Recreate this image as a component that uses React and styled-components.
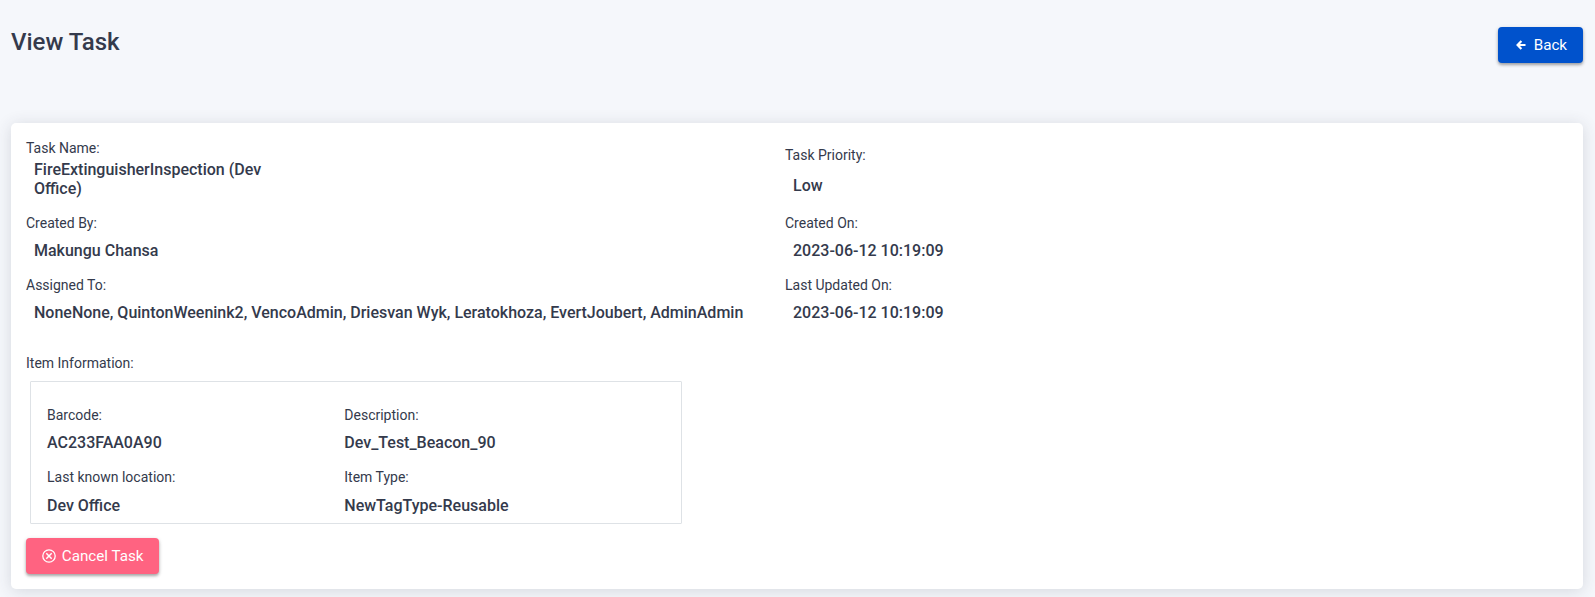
import React from "react";
import styled, { createGlobalStyle } from "styled-components";

const GlobalStyle = createGlobalStyle`
  * { box-sizing: border-box; }
  html, body { margin: 0; height: 100%; overflow: hidden; }
  body {
    background: #f5f7fb;
    color: #343a4c;
    font-family: Roboto, "Liberation Sans", sans-serif;
    font-size: 14px;
    line-height: 21px;
  }
`;

const Page = styled.main`
  width: 100%;
  padding: 27px 12px 8px 11px;
`;

const Header = styled.header`
  display: flex;
  justify-content: space-between;
  align-items: flex-start;
  height: 96px;
`;

const Title = styled.h1`
  margin: 0;
  font-size: 24px;
  font-weight: 500;
  line-height: 31px;
`;

const Button = styled.button`
  display: inline-flex;
  align-items: center;
  gap: ${(p) => p.$gap}px;
  width: ${(p) => p.$width}px;
  height: 36px;
  padding: 0 0 0 ${(p) => p.$inset}px;
  border: 0;
  border-radius: 4px;
  background: ${(p) => p.$color};
  color: #fff;
  font: 400 15.2px/22px Roboto, "Liberation Sans", sans-serif;
  white-space: nowrap;
  box-shadow: 0 2px 3px rgba(0, 0, 0, 0.3), 0 1px 5px rgba(0, 0, 0, 0.1);
`;

const Card = styled.section`
  height: 466px;
  padding: 15px;
  border-radius: 5px;
  background: #fff;
  box-shadow: 0 2px 16px rgba(50, 55, 75, 0.16);
`;

const Details = styled.div`
  display: grid;
  grid-template-columns: 759px 1fr;
  grid-template-rows: 75px 62px 78px;
`;

const Field = styled.div`
  padding-top: ${(p) => p.$offset || 0}px;
`;

const Label = styled.div`
  height: 21px;
`;

const Value = styled.div`
  max-width: ${(p) => (p.$narrow ? "245px" : "none")};
  margin-top: ${(p) => p.$gap ?? 7}px;
  padding-left: ${(p) => (p.$indent ? 8 : 0)}px;
  font-size: 16px;
  font-weight: 500;
  line-height: 19px;
`;

const ItemBox = styled.div`
  display: grid;
  grid-template-columns: 297.3px 1fr;
  grid-template-rows: 62px 1fr;
  width: 652px;
  height: 143px;
  margin: 7px 0 14px 4px;
  padding: 23px 16px 0;
  border: 1px solid #dee2e6;
  border-radius: 1px;
`;

const BackArrow = () => (
  <svg width="10" height="10" viewBox="0 0 10 10" fill="none" stroke="#fff" strokeWidth="2.2">
    <path d="M5.4 1.1 1.6 5l3.8 3.9M1.7 5H9.5" />
  </svg>
);

const CancelIcon = () => (
  <svg width="14" height="14" viewBox="0 0 14 14" fill="none" stroke="#fff" strokeWidth="1.3">
    <circle cx="7" cy="7" r="6.2" />
    <path d="m4.3 4.3 5.4 5.4M9.7 4.3 4.3 9.7" strokeWidth="1.5" />
  </svg>
);

const taskFields = [
  { label: "Task Name:", value: "FireExtinguisherInspection (Dev Office)", narrow: true, gap: 1 },
  { label: "Task Priority:", value: "Low", offset: 7, gap: 10 },
  { label: "Created By:", value: "Makungu Chansa" },
  { label: "Created On:", value: "2023-06-12 10:19:09" },
  {
    label: "Assigned To:",
    value:
      "NoneNone, QuintonWeenink2, VencoAdmin, Driesvan Wyk, Leratokhoza, EvertJoubert, AdminAdmin",
  },
  { label: "Last Updated On:", value: "2023-06-12 10:19:09" },
];

const itemFields = [
  { label: "Barcode:", value: "AC233FAA0A90" },
  { label: "Description:", value: "Dev_Test_Beacon_90" },
  { label: "Last known location:", value: "Dev Office", gap: 8 },
  { label: "Item Type:", value: "NewTagType-Reusable", gap: 8 },
];

export default function App() {
  return (
    <>
      <GlobalStyle />
      <Page>
        <Header>
          <Title>View Task</Title>
          <Button $color="#0052cc" $width={85} $inset={18.2} $gap={7.5}>
            <BackArrow />
            Back
          </Button>
        </Header>
        <Card>
          <Details>
            {taskFields.map((f) => (
              <Field key={f.label} $offset={f.offset}>
                <Label>{f.label}</Label>
                <Value $indent $narrow={f.narrow} $gap={f.gap}>
                  {f.value}
                </Value>
              </Field>
            ))}
          </Details>
          <Label>Item Information:</Label>
          <ItemBox>
            {itemFields.map((f) => (
              <Field key={f.label}>
                <Label>{f.label}</Label>
                <Value $gap={f.gap}>{f.value}</Value>
              </Field>
            ))}
          </ItemBox>
          <Button $color="#ff6381" $width={133} $inset={16.3} $gap={5.5}>
            <CancelIcon />
            Cancel Task
          </Button>
        </Card>
      </Page>
    </>
  );
}
